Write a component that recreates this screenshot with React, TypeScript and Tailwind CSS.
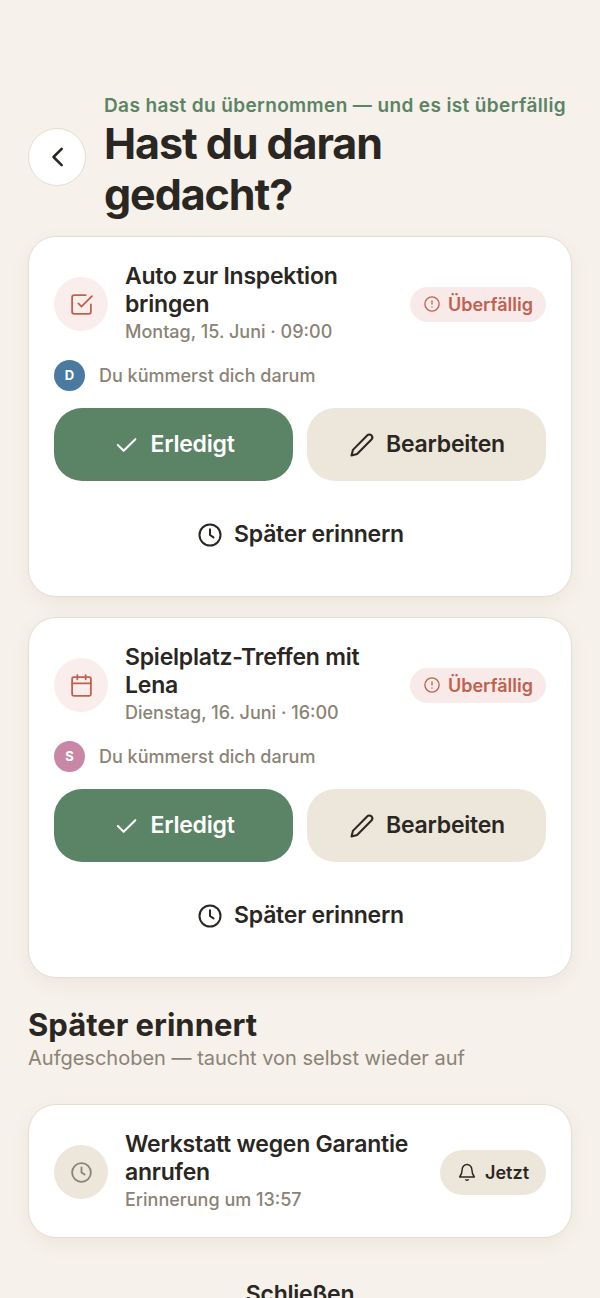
import type { ReactNode } from "react";

interface IconProps {
  size: number;
  strokeWidth?: number;
  children: ReactNode;
}

function Icon({ size, strokeWidth = 1.75, children }: IconProps) {
  return (
    <svg
      width={size}
      height={size}
      viewBox="0 0 24 24"
      fill="none"
      stroke="currentColor"
      strokeWidth={strokeWidth}
      strokeLinecap="round"
      strokeLinejoin="round"
      aria-hidden="true"
      className="shrink-0"
    >
      {children}
    </svg>
  );
}

const clock = (
  <>
    <circle cx="12" cy="12" r="9" />
    <path d="M12 7v5l3 2" />
  </>
);

const checkSquare = (
  <>
    <path d="m9 11 3 3L22 4" />
    <path d="M21 12v7a2 2 0 0 1-2 2H5a2 2 0 0 1-2-2V5a2 2 0 0 1 2-2h11" />
  </>
);

const calendar = (
  <>
    <rect x="3" y="4" width="18" height="18" rx="1.5" />
    <path d="M16 2v4M8 2v4M3 10h18" />
  </>
);

interface Task {
  title: string;
  due: string;
  initial: string;
  avatar: string;
  icon: ReactNode;
}

const tasks: Task[] = [
  {
    title: "Auto zur Inspektion bringen",
    due: "Montag, 15. Juni · 09:00",
    initial: "D",
    avatar: "bg-[#4a7a9f]",
    icon: checkSquare,
  },
  {
    title: "Spielplatz-Treffen mit Lena",
    due: "Dienstag, 16. Juni · 16:00",
    initial: "S",
    avatar: "bg-[#c987a6]",
    icon: calendar,
  },
];

const cardClass =
  "rounded-[28px] border border-[#e5ddd0] bg-white px-[25px] pt-[25px] shadow-[0_6px_20px_rgba(60,45,30,0.06)]";

const titleClass = "text-[23px] leading-[28px] font-semibold tracking-[-0.01em]";
const metaClass = "text-[18px] leading-[28px] font-medium text-[#8a8376]";

const buttonClass =
  "flex h-[73px] items-center justify-center gap-[10px] rounded-[28px] text-[23px] font-semibold tracking-[-0.01em]";

function TaskCard({ task }: { task: Task }) {
  return (
    <article className={`${cardClass} pb-[25px]`}>
      <div className="flex items-center gap-[17px]">
        <div className="flex size-[54px] shrink-0 items-center justify-center rounded-full bg-[#f9eeec] text-[#c0614f]">
          <Icon size={25}>{task.icon}</Icon>
        </div>
        <div className="min-w-0 flex-1">
          <h2 className={titleClass}>{task.title}</h2>
          <p className={metaClass}>{task.due}</p>
        </div>
        <span className="ml-5 flex h-[35px] shrink-0 items-center gap-[7px] rounded-full bg-[#f8eae8] px-[13px] text-[18px] font-semibold text-[#c0614f]">
          <Icon size={18}>
            <circle cx="12" cy="12" r="9.5" />
            <path d="M12 8v4M12 16h.01" />
          </Icon>
          Überfällig
        </span>
      </div>

      {/* Responsible person */}
      <div className="mt-[14px] flex items-center gap-[14px]">
        <span
          className={`flex size-[31px] items-center justify-center rounded-full text-[13px] font-bold text-white ${task.avatar}`}
        >
          {task.initial}
        </span>
        <span className={metaClass}>Du kümmerst dich darum</span>
      </div>

      {/* Actions */}
      <div className="mt-[17px] grid grid-cols-2 gap-x-[14px] gap-y-[17px]">
        <button type="button" className={`${buttonClass} bg-[#5b8366] text-white`}>
          <Icon size={28}>
            <path d="m5 12 5 5L20 7" />
          </Icon>
          Erledigt
        </button>
        <button type="button" className={`${buttonClass} bg-[#ede6da]`}>
          <Icon size={28}>
            <path d="M16.4 3.8a2.5 2.5 0 0 1 3.7 3.5L7.8 19.7 3 21l1.2-4.8z" />
          </Icon>
          Bearbeiten
        </button>
        <button type="button" className={`${buttonClass} col-span-2`}>
          <Icon size={28}>{clock}</Icon>
          Später erinnern
        </button>
      </div>
    </article>
  );
}

export default function App() {
  return (
    <main className="min-h-screen bg-[#f6f1ea] px-7 pt-[93px] font-['Inter',sans-serif] text-[#2a2723]">
      <header className="flex items-center gap-[18px]">
        <button
          type="button"
          aria-label="Zurück"
          className="flex size-[58px] shrink-0 items-center justify-center rounded-full border border-[#e5ddd0] bg-white"
        >
          <Icon size={28} strokeWidth={2.2}>
            <path d="m16 5-7 7 7 7" />
          </Icon>
        </button>
        <div className="min-w-0 flex-1">
          <p className="text-[19px] leading-[25px] font-semibold tracking-[0.02em] whitespace-nowrap text-[#5b8366]">
            Das hast du übernommen — und es ist überfällig
          </p>
          <h1 className="max-w-[360px] text-[43px] leading-[51px] font-bold tracking-tight">
            Hast du daran gedacht?
          </h1>
        </div>
      </header>

      <section className="mt-4 flex flex-col gap-5">
        {tasks.map((task) => (
          <TaskCard key={task.title} task={task} />
        ))}
      </section>

      <section className="mt-7">
        <h2 className="text-[31px] leading-[38px] font-bold">Später erinnert</h2>
        <p className="text-[20px] leading-[28px] text-[#8a8376]">
          Aufgeschoben — taucht von selbst wieder auf
        </p>
        <article className={`${cardClass} mt-8 flex items-center gap-[17px] pb-[23px]`}>
          <div className="flex size-[54px] shrink-0 items-center justify-center rounded-full bg-[#ede6da] text-[#8a8376]">
            <Icon size={25}>{clock}</Icon>
          </div>
          <div className="min-w-0 flex-1">
            <h3 className={titleClass}>Werkstatt wegen Garantie anrufen</h3>
            <p className={metaClass}>Erinnerung um 13:57</p>
          </div>
          <button
            type="button"
            className="flex h-[45px] shrink-0 items-center gap-2 rounded-full bg-[#ede6da] px-[17px] text-[18px] font-semibold"
          >
            <Icon size={20}>
              <path d="M6.2 9a5.8 6 0 0 1 11.6 0c0 4.5 1.3 6.500 3 9H3.2c1.7-2.5 3-4.5 3-9z" />
              <path d="M10.5 21.3a2.4 2.4 0 0 0 3 0" />
            </Icon>
            Jetzt
          </button>
        </article>
      </section>

      <button
        type="button"
        className="mt-5 flex h-[73px] w-full items-center justify-center text-[23px] font-semibold tracking-[-0.01em]"
      >
        Schließen
      </button>
    </main>
  );
}
